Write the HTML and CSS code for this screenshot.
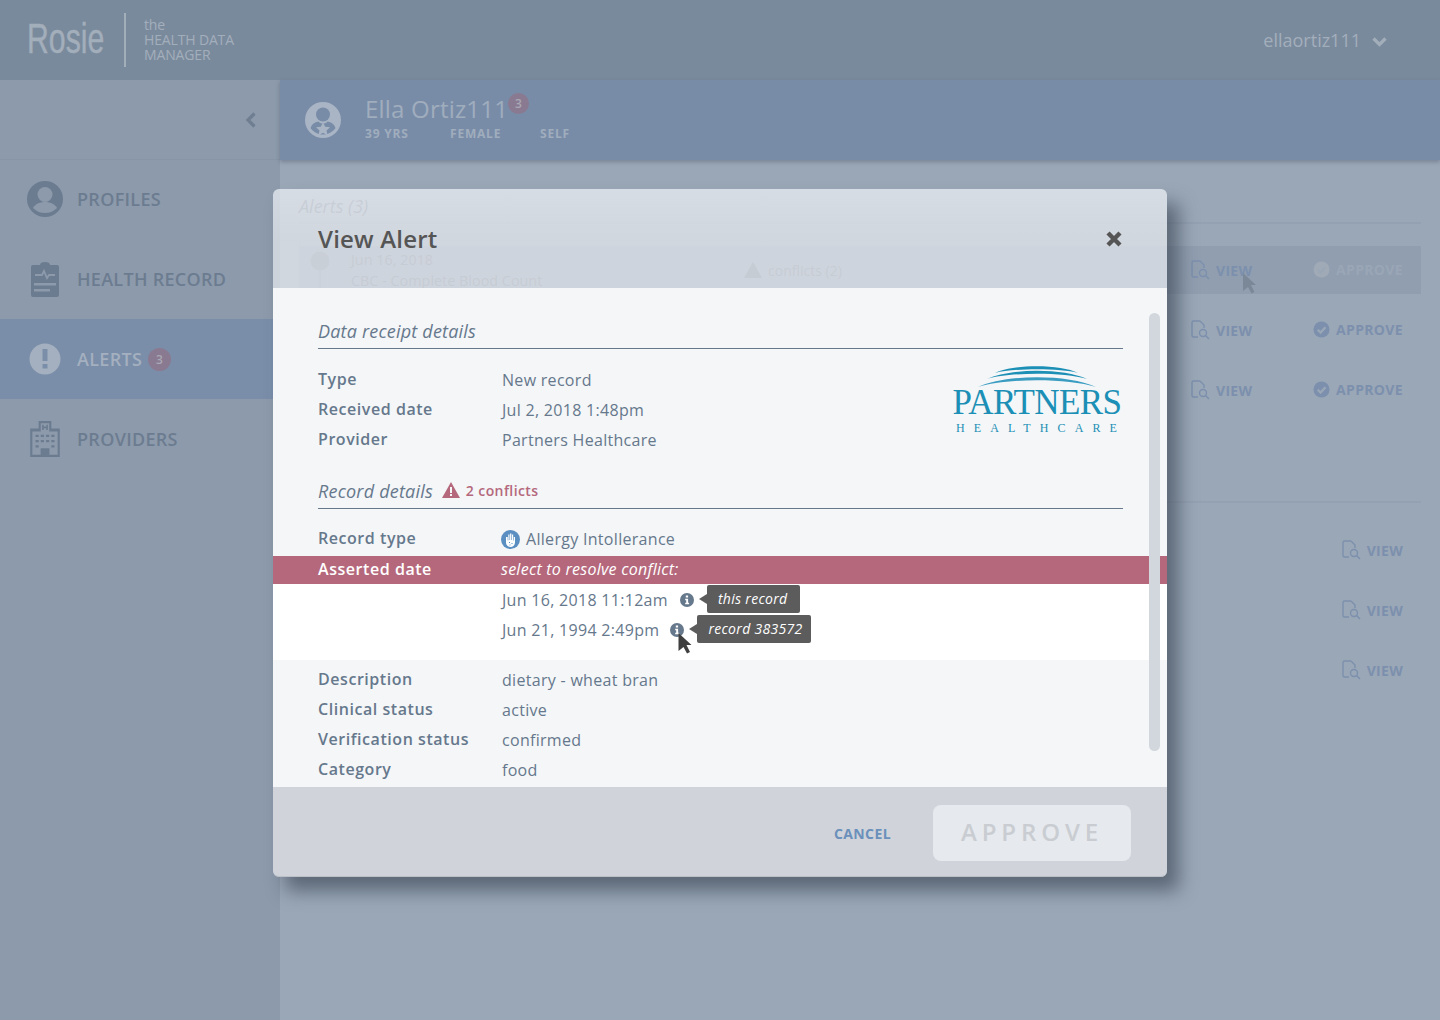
FILE: index.html
```html
<!DOCTYPE html>
<html>

<head>
    <title>Rosie - View Alert</title>
    <link rel="stylesheet" href="styles.css">
</head>

<body>
    <svg class="defs" width="0" height="0">
        <symbol id="doc-search" viewBox="0 0 20 20">
            <path d="M10 1H3.500A1.500 1.500 0 0 0 2 2.500v13A1.500 1.500 0 0 0 3.500 17H8M10 1l4 4v3" fill="none" stroke="currentColor" stroke-width="1.400"/>
            <circle cx="13" cy="13" r="3.500" fill="none" stroke="currentColor" stroke-width="1.400"/>
            <path d="M15.500 15.500L19 19" stroke="currentColor" stroke-width="1.600"/>
        </symbol>
        <symbol id="check-circle" viewBox="0 0 18 18">
            <circle cx="9" cy="9" r="8.500" fill="currentColor"/>
            <path d="M5 9.200l3 3 5.200-5.600" fill="none" stroke="#9aa7b7" stroke-width="2.400"/>
        </symbol>
        <symbol id="info" viewBox="0 0 14 14">
            <circle cx="7" cy="7" r="7" fill="currentColor"/>
            <path d="M5.800 2.500h2.300v2H5.800zM5.200 5.700h2.900v4h1v1.600H5.200V9.700h1V7.300h-1z" fill="#fff"/>
        </symbol>
    </svg>

    <div class="app">
        <header class="topbar">
            <div class="brand">
                <div class="brand-name"><span>Rosie</span></div>
                <div class="brand-tag"><span>the</span><span>HEALTH DATA</span><span>MANAGER</span></div>
            </div>
            <div class="user-menu">
                <span>ellaortiz111</span>
                <svg width="15" height="10" viewBox="0 0 15 10"><path d="M1.500 1.500l6 6 6-6" fill="none" stroke="currentColor" stroke-width="3.200"/></svg>
            </div>
        </header>

        <div class="workspace">
            <aside class="sidebar">
                <div class="collapse">
                    <svg width="12" height="16" viewBox="0 0 12 16"><path d="M9.500 1.500L3 8l6.500 6.500" fill="none" stroke="currentColor" stroke-width="3.200"/></svg>
                </div>
                <nav>
                    <a class="nav-item">
                        <svg width="36" height="36" viewBox="0 0 36 36">
                            <circle cx="18" cy="18" r="18" fill="currentColor"/>
                            <circle cx="18" cy="13.500" r="7.500" fill="#8c9aab"/>
                            <path d="M6 27c2-4 7-6 12-6s10 2 12 6c-3 3-7 5-12 5S9 30 6 27z" fill="#8c9aab"/>
                        </svg>
                        <span>PROFILES</span>
                    </a>
                    <a class="nav-item">
                        <svg width="36" height="38" viewBox="0 0 36 38">
                            <path d="M6 5h7c0-2 2-3 5-3s5 1 5 3h7a2 2 0 0 1 2 2v28a2 2 0 0 1-2 2H6a2 2 0 0 1-2-2V7a2 2 0 0 1 2-2z" fill="currentColor"/>
                            <path d="M8 15h7l2-4 3 7 2-3h6" fill="none" stroke="#8c9aab" stroke-width="1.800"/>
                            <path d="M7 23h22v2.500H7zM7 29h16v2.500H7z" fill="#8c9aab"/>
                        </svg>
                        <span>HEALTH RECORD</span>
                    </a>
                    <a class="nav-item active">
                        <svg width="36" height="36" viewBox="-2 -2 36 36">
                            <circle cx="16" cy="16" r="15.500" fill="currentColor"/>
                            <path d="M13.500 6h5v12h-5zM13.500 21h5v4.500h-5z" fill="#7a8ea9"/>
                        </svg>
                        <span>ALERTS</span>
                        <b class="count">3</b>
                    </a>
                    <a class="nav-item">
                        <svg width="36" height="38" viewBox="0 0 30 36">
                            <path d="M9 1h12v7h8v27H1V8h8zM11 3v8h8V3zM3 11v22h8v-6h8v6h8V11z" fill="currentColor" fill-rule="evenodd"/>
                            <path d="M13 4.500v5M17 4.500v5M13 7h4" stroke="currentColor" stroke-width="1.500"/>
                            <path d="M6 14h3v2H6zM11 14h3v2h-3zM16 14h3v2h-3zM21 14h3v2h-3zM6 19h3v2H6zM11 19h3v2h-3zM16 19h3v2h-3zM21 19h3v2h-3zM6 24h3v2H6zM21 24h3v2h-3z" fill="currentColor"/>
                            <path d="M11 27h8v6h-8z" fill="currentColor"/>
                        </svg>
                        <span>PROVIDERS</span>
                    </a>
                </nav>
            </aside>

            <main class="main">
                <section class="profile-bar">
                    <svg class="profile-avatar" width="36" height="36" viewBox="0 0 36 36">
                        <circle cx="18" cy="18" r="18" fill="currentColor"/>
                        <circle cx="18" cy="12.500" r="7" fill="#788ca8"/>
                        <path d="M5.500 26c1.500-4 4-6 8-6.500 1 1.500 2.500 2 4.500 2s3.500-.5 4.500-2c4 .5 6.500 2.500 8 6.500-3 4-7 6.500-12.500 6.500S8.500 30 5.500 26z" fill="#788ca8"/>
                        <path d="M18 20.500l2.200 4.300 4.800.5-3.500 3.200 1 4.700-4.500-2.400-4.500 2.400 1-4.700-3.500-3.200 4.800-.5z" fill="currentColor"/>
                    </svg>
                    <div>
                        <div class="profile-name">Ella Ortiz111<b class="count name-count">3</b></div>
                        <div class="profile-meta"><span class="age">39 YRS</span><span class="sex">FEMALE</span><span>SELF</span></div>
                    </div>
                </section>

                <section class="alerts">
                    <h3 class="alerts-title">Alerts (3)</h3>
                    <div class="alert-row selected">
                        <svg class="row-icon" width="20" height="46" viewBox="0 0 20 46">
                            <circle cx="10" cy="15" r="9.500" fill="currentColor"/>
                            <path d="M10 25v21" stroke="currentColor" stroke-width="1"/>
                        </svg>
                        <div class="row-text"><span>Jun 16, 2018</span><span>CBC - Complete Blood Count</span></div>
                        <div class="row-conflict">
                            <svg width="18" height="16" viewBox="0 0 18 16"><path d="M9 0l9 16H0z" fill="currentColor"/></svg>
                            <span>conflicts (2)</span>
                        </div>
                        <a class="row-link view"><svg width="20" height="20"><use href="#doc-search"/></svg>VIEW</a>
                        <a class="row-link approve faded"><svg width="17" height="17"><use href="#check-circle"/></svg>APPROVE</a>
                    </div>
                    <div class="alert-row">
                        <a class="row-link view"><svg width="20" height="20"><use href="#doc-search"/></svg>VIEW</a>
                        <a class="row-link approve"><svg width="17" height="17"><use href="#check-circle"/></svg>APPROVE</a>
                    </div>
                    <div class="alert-row">
                        <a class="row-link view"><svg width="20" height="20"><use href="#doc-search"/></svg>VIEW</a>
                        <a class="row-link approve"><svg width="17" height="17"><use href="#check-circle"/></svg>APPROVE</a>
                    </div>

                    <div class="history">
                        <div class="history-row"><a class="row-link view"><svg width="20" height="20"><use href="#doc-search"/></svg>VIEW</a></div>
                        <div class="history-row"><a class="row-link view"><svg width="20" height="20"><use href="#doc-search"/></svg>VIEW</a></div>
                        <div class="history-row"><a class="row-link view"><svg width="20" height="20"><use href="#doc-search"/></svg>VIEW</a></div>
                    </div>
                </section>
            </main>
        </div>

        <svg class="cursor cursor-back" width="14" height="22" viewBox="0 0 14 22"><path d="M0 0l13 12H8l3.500 7-3 1.500L5 14l-5 4z" fill="currentColor"/></svg>

        <div class="modal">
            <div class="modal-head">
                <h2>View Alert</h2>
                <svg width="18" height="18" viewBox="0 0 18 18"><path d="M3 3l12 12M15 3L3 15" stroke="#555" stroke-width="4.400"/></svg>
            </div>

            <div class="modal-body">
                <div class="section-title"><em>Data receipt details</em></div>
                <div class="receipt">
                    <div class="rows">
                        <div class="row"><label>Type</label><span>New record</span></div>
                        <div class="row"><label>Received date</label><span>Jul 2, 2018 1:48pm</span></div>
                        <div class="row"><label>Provider</label><span>Partners Healthcare</span></div>
                    </div>
                    <div class="logo">
                        <svg width="118" height="22" viewBox="0 0 118 22">
                            <path d="M17 8C35-1 83-1 100 8C83 3 35 3 17 8z" fill="#1b8fb5"/>
                            <path d="M9 14C32 3 86 3 109 14C86 7 32 7 9 14z" fill="#1b8fb5"/>
                            <path d="M0 22C28 9 90 9 118 22C90 13 28 13 0 22z" fill="#3a9cc0"/>
                        </svg>
                        <div class="logo-name">PARTNERS</div>
                        <div class="logo-sub">HEALTHCARE</div>
                    </div>
                </div>

                <div class="section-title record-title">
                    <em>Record details</em>
                    <svg width="18" height="16" viewBox="0 0 18 16"><path d="M9 0l9 16H0z" fill="#b5687c"/><path d="M8 5h2v6H8zM8 12h2v2H8z" fill="#f4f6f8"/></svg>
                    <span class="conflicts">2 conflicts</span>
                </div>

                <div class="rows record-rows">
                    <div class="row"><label>Record type</label>
                        <span class="with-icon">
                            <svg width="19" height="19" viewBox="0 0 19 19">
                                <circle cx="9.500" cy="9.500" r="9.500" fill="#5b8fc2"/>
                                <path d="M5 7v5.500c0 2.500 2 4.500 4.500 4.500s4.500-2 4.500-4.500V7h-1.200v3.500h-.6V4.500H11V10h-.6V3.500H9.100V10h-.6V4.500H7.300V10.500h-.6V7z" fill="#fff"/>
                                <path d="M8 12h1v1H8zM10.500 13h1v1h-1zM8.500 14.500h1v1h-1z" fill="#5b8fc2"/>
                            </svg>
                            Allergy Intollerance
                        </span>
                    </div>
                </div>
                <div class="conflict-band">
                    <label>Asserted date</label>
                    <em>select to resolve conflict:</em>
                </div>
                <div class="conflict-options">
                    <div class="option first-option">
                        <span>Jun 16, 2018 11:12am</span>
                        <svg class="info" width="14" height="14"><use href="#info"/></svg>
                        <span class="tip">this record</span>
                    </div>
                    <div class="option">
                        <span>Jun 21, 1994 2:49pm</span>
                        <svg class="info" width="14" height="14"><use href="#info"/></svg>
                        <span class="tip">record 383572</span>
                    </div>
                </div>
                <div class="rows tail-rows">
                    <div class="row"><label>Description</label><span>dietary - wheat bran</span></div>
                    <div class="row"><label>Clinical status</label><span>active</span></div>
                    <div class="row"><label>Verification status</label><span>confirmed</span></div>
                    <div class="row"><label>Category</label><span>food</span></div>
                </div>
                <div class="scrollbar"></div>
                <svg class="cursor cursor-front" width="15" height="22" viewBox="0 0 14 22"><path d="M0 0l13 12H8l3.500 7-3 1.500L5 14l-5 4z" fill="currentColor"/></svg>
            </div>

            <div class="modal-foot">
                <a class="cancel">CANCEL</a>
                <button class="approve-btn"><span>APPROVE</span></button>
            </div>
        </div>
    </div>
</body>

</html>
```

FILE: styles.css
```css
* {
    box-sizing: border-box;
}

body {
    margin: 0;
    font-family: "Open Sans", sans-serif;
    font-size: 16px;
    color: #66788c;
    background-color: #9aa7b7;
}

.defs {
    position: absolute;
}

.app {
    position: relative;
    width: 1440px;
    height: 1020px;
    overflow: hidden;
}

/* top bar */
.topbar {
    height: 80px;
    display: flex;
    align-items: center;
    justify-content: space-between;
    padding: 0 53px 0 27px;
    background-color: #7a8a9d;
    color: #a3aebb;
}

.brand {
    display: flex;
    align-items: center;
}

.brand-name {
    width: 99px;
    height: 54px;
    border-right: 2px solid #a3aebb;
    font-family: "Liberation Sans", sans-serif;
    font-size: 42px;
    line-height: 52px;
    -webkit-text-stroke: 0.4px #a3aebb;
}

/* no condensed font is installed, so the word is narrowed */
.brand-name span {
    display: inline-block;
    transform: scaleX(0.72);
    transform-origin: left center;
}

.brand-tag {
    display: flex;
    flex-direction: column;
    margin-left: 18px;
    margin-top: -2px;
    font-size: 14px;
    line-height: 15px;
    letter-spacing: -0.15px;
}

.user-menu {
    display: flex;
    align-items: center;
    gap: 11px;
    font-size: 18px;
}

.user-menu svg {
    margin-top: 3px;
}

/* side navigation */
.workspace {
    display: flex;
    height: 940px;
}

.sidebar {
    width: 280px;
    flex: none;
    background-color: #8c9aab;
}

.collapse {
    height: 80px;
    display: flex;
    align-items: center;
    justify-content: flex-end;
    padding-right: 23px;
    border-bottom: 1px solid #8795a7;
    color: #6f7f91;
}

.nav-item {
    height: 80px;
    display: flex;
    align-items: center;
    gap: 14px;
    padding-left: 27px;
    padding-bottom: 2px;
    font-size: 18px;
    font-weight: 600;
    letter-spacing: 0.3px;
    color: #6c7c90;
}

.nav-item.active {
    margin-top: -1px;
    margin-bottom: 1px;
    padding-bottom: 0;
    background-color: #7a8ea9;
    color: #a4b0bf;
}

.count {
    width: 23px;
    height: 23px;
    display: inline-flex;
    align-items: center;
    justify-content: center;
    margin-left: -8px;
    border-radius: 50%;
    font-size: 12px;
    font-weight: 600;
    background-color: #8a7a91;
    color: #a9a8b5;
}

/* profile header */
.main {
    flex: 1;
}

.profile-bar {
    position: relative;
    height: 80px;
    display: flex;
    align-items: center;
    gap: 24px;
    padding: 0 0 0 25px;
    background-color: #788ca8;
    color: #a0adbd;
    box-shadow: 0 2px 4px rgba(60, 70, 85, 0.35);
}

.profile-avatar {
    color: #a9b5c4;
}

.profile-name {
    position: relative;
    font-size: 24px;
    line-height: 30px;
    letter-spacing: 0.2px;
    margin-top: -4px;
}

.name-count {
    position: absolute;
    left: 143px;
    top: -1px;
    margin-left: 0;
    width: 21px;
    height: 21px;
}

.profile-meta {
    display: flex;
    margin-top: 1px;
    font-size: 12px;
    font-weight: 700;
    letter-spacing: 0.8px;
}

.age {
    width: 85px;
}

.sex {
    width: 90px;
}

/* alert list behind the dialog */
.alerts {
    padding: 32px 19px 0 19px;
}

.alerts-title {
    margin: 0;
    padding-bottom: 2px;
    border-bottom: 2px solid #94a1b2;
    font-size: 18px;
    font-style: italic;
    font-weight: 400;
    line-height: 28px;
    color: #6c7989;
}

.alert-row {
    height: 48px;
    display: flex;
    align-items: center;
    margin-bottom: 12px;
    position: relative;
}

.alerts-title + .alert-row {
    margin-top: 22px;
}

.selected {
    background-color: #909eb0;
    color: #8795a7;
}

.row-icon {
    margin-left: 11px;
    color: #7f8c9c;
    align-self: flex-start;
}

.row-text {
    display: flex;
    flex-direction: column;
    margin-left: 21px;
    font-size: 14.400px;
    line-height: 21px;
    color: #74818f;
}

.row-conflict {
    position: absolute;
    left: 445px;
    display: flex;
    align-items: center;
    gap: 6px;
    font-size: 14px;
    color: #74818f;
}

.row-link {
    display: flex;
    align-items: center;
    gap: 6px;
    font-size: 14px;
    font-weight: 700;
    letter-spacing: 0.3px;
    color: #7c90ad;
}

.view {
    position: absolute;
    left: 891px;
}

.approve {
    position: absolute;
    right: 18px;
    margin-top: -2px;
    letter-spacing: 0.35px;
}

.selected .approve.faded {
    color: #9aa6b6;
}

.faded svg {
    color: #a0aab6;
}

.history {
    margin-top: 87px;
    padding-top: 17px;
    border-top: 2px solid #94a1b2;
}

.history-row {
    height: 60px;
    position: relative;
    display: flex;
    align-items: center;
}

.history-row .view {
    left: auto;
    right: 18px;
}

/* dialog */
.modal {
    position: absolute;
    left: 273px;
    top: 189px;
    width: 894px;
    height: 688px;
    display: flex;
    flex-direction: column;
    border-radius: 6px;
    box-shadow: 12px 14px 18px rgba(60, 70, 85, 0.65);
}

.modal-head {
    height: 99px;
    flex: none;
    display: flex;
    align-items: center;
    justify-content: space-between;
    padding: 0 44px 0 45px;
    border-radius: 6px 6px 0 0;
    background: linear-gradient(rgba(238, 241, 246, 0.72), rgba(230, 233, 238, 0.72) 50%);
}

.modal-head h2 {
    margin: -1px 0 0;
    font-size: 24px;
    font-weight: 600;
    letter-spacing: 0.2px;
    color: #555;
}

.modal-head svg {
    margin-top: 1px;
}

.modal-body {
    position: relative;
    flex: 1;
    padding-top: 30px;
    background-color: #f4f6f8;
    overflow: hidden;
}

.section-title {
    height: 31px;
    margin: 0 44px 0 45px;
    border-bottom: 1px solid #66788c;
    font-size: 18px;
    line-height: 27px;
    letter-spacing: 0.2px;
}

.record-title {
    display: flex;
    align-items: center;
    margin-top: 23px;
    padding-bottom: 4px;
}

.record-title svg {
    margin-left: 9px;
    margin-right: 6px;
    margin-top: -2px;
}

.conflicts {
    margin-bottom: 2px;
    font-size: 14px;
    font-weight: 600;
    letter-spacing: 0.4px;
    color: #b5687c;
}

.receipt {
    display: flex;
    justify-content: space-between;
    margin: 16px 44px 0 45px;
    height: 90px;
}

.row {
    height: 30px;
    display: flex;
    align-items: center;
}

.row label,
.conflict-band label {
    width: 184px;
    flex: none;
    font-weight: 600;
    letter-spacing: 0.55px;
    margin-bottom: 2px;
}

.row span {
    letter-spacing: 0.3px;
}

.record-rows {
    margin: 15px 44px 0 45px;
}

.with-icon {
    display: flex;
    align-items: center;
    gap: 6px;
    margin-left: -1px;
}

.conflict-band {
    height: 28px;
    display: flex;
    align-items: center;
    margin-top: 2px;
    padding-left: 45px;
    background-color: #b5687c;
    color: #fff;
    font-size: 16px;
}

.conflict-band em {
    letter-spacing: 0.25px;
    margin-left: -1px;
    margin-bottom: 2px;
}

.conflict-options {
    height: 76px;
    padding: 1px 0 0 229px;
    background-color: #fff;
}

.option {
    height: 30px;
    display: flex;
    align-items: center;
    letter-spacing: 0.3px;
}

.info {
    margin-left: 11px;
    color: #66788c;
}

.first-option .info {
    margin-left: 12px;
}

.tip {
    position: relative;
    height: 28px;
    margin-left: 13px;
    margin-top: -2px;
    padding: 0 8px 0 11px;
    border-radius: 2px;
    background-color: #5c5c5c;
    color: #fff;
    font-size: 14px;
    font-style: italic;
    line-height: 28px;
}

.first-option .tip {
    padding-right: 13px;
}

.tip::before {
    content: "";
    position: absolute;
    left: -8px;
    top: 9px;
    border-style: solid;
    border-width: 5px 8px 5px 0;
    border-color: transparent #5c5c5c transparent transparent;
}

.tail-rows {
    margin: 5px 44px 0 45px;
}

.scrollbar {
    position: absolute;
    left: 876px;
    top: 25px;
    width: 11px;
    height: 438px;
    border-radius: 6px;
    background-color: #d2d7dd;
}

.cursor {
    position: absolute;
}

.cursor-back {
    left: 1243px;
    top: 273px;
    color: #7b8898;
}

.cursor-front {
    left: 405px;
    top: 345px;
    color: #3f3f3f;
}

/* partners logo */
.logo {
    width: 172px;
    display: flex;
    flex-direction: column;
    align-items: center;
    color: #1b8fb5;
    font-family: "Liberation Serif", serif;
}

.logo svg {
    flex: none;
}

.logo-name {
    font-size: 35px;
    line-height: 32px;
    letter-spacing: -0.6px;
    white-space: nowrap;
}

.logo-sub {
    font-size: 12px;
    line-height: 14px;
    letter-spacing: 9.100px;
    margin-right: -8px;
    margin-top: 2px;
    white-space: nowrap;
}

.modal-foot {
    height: 90px;
    flex: none;
    display: flex;
    align-items: center;
    justify-content: flex-end;
    gap: 42px;
    padding: 3px 36px 0 0;
    border-radius: 0 0 6px 6px;
    background-color: #d0d4da;
    border-bottom: 1px solid #bcc1c8;
}

.cancel {
    font-size: 14px;
    font-weight: 700;
    letter-spacing: 0.4px;
    color: #6a90bb;
}

.approve-btn {
    width: 198px;
    height: 56px;
    padding: 0 0 3px;
    border: 0;
    border-radius: 8px;
    background-color: #e6e9ed;
    color: #c9cdd2;
    font-family: "Open Sans", sans-serif;
    font-size: 24px;
    font-weight: 600;
    letter-spacing: 4.900px;
}
```
